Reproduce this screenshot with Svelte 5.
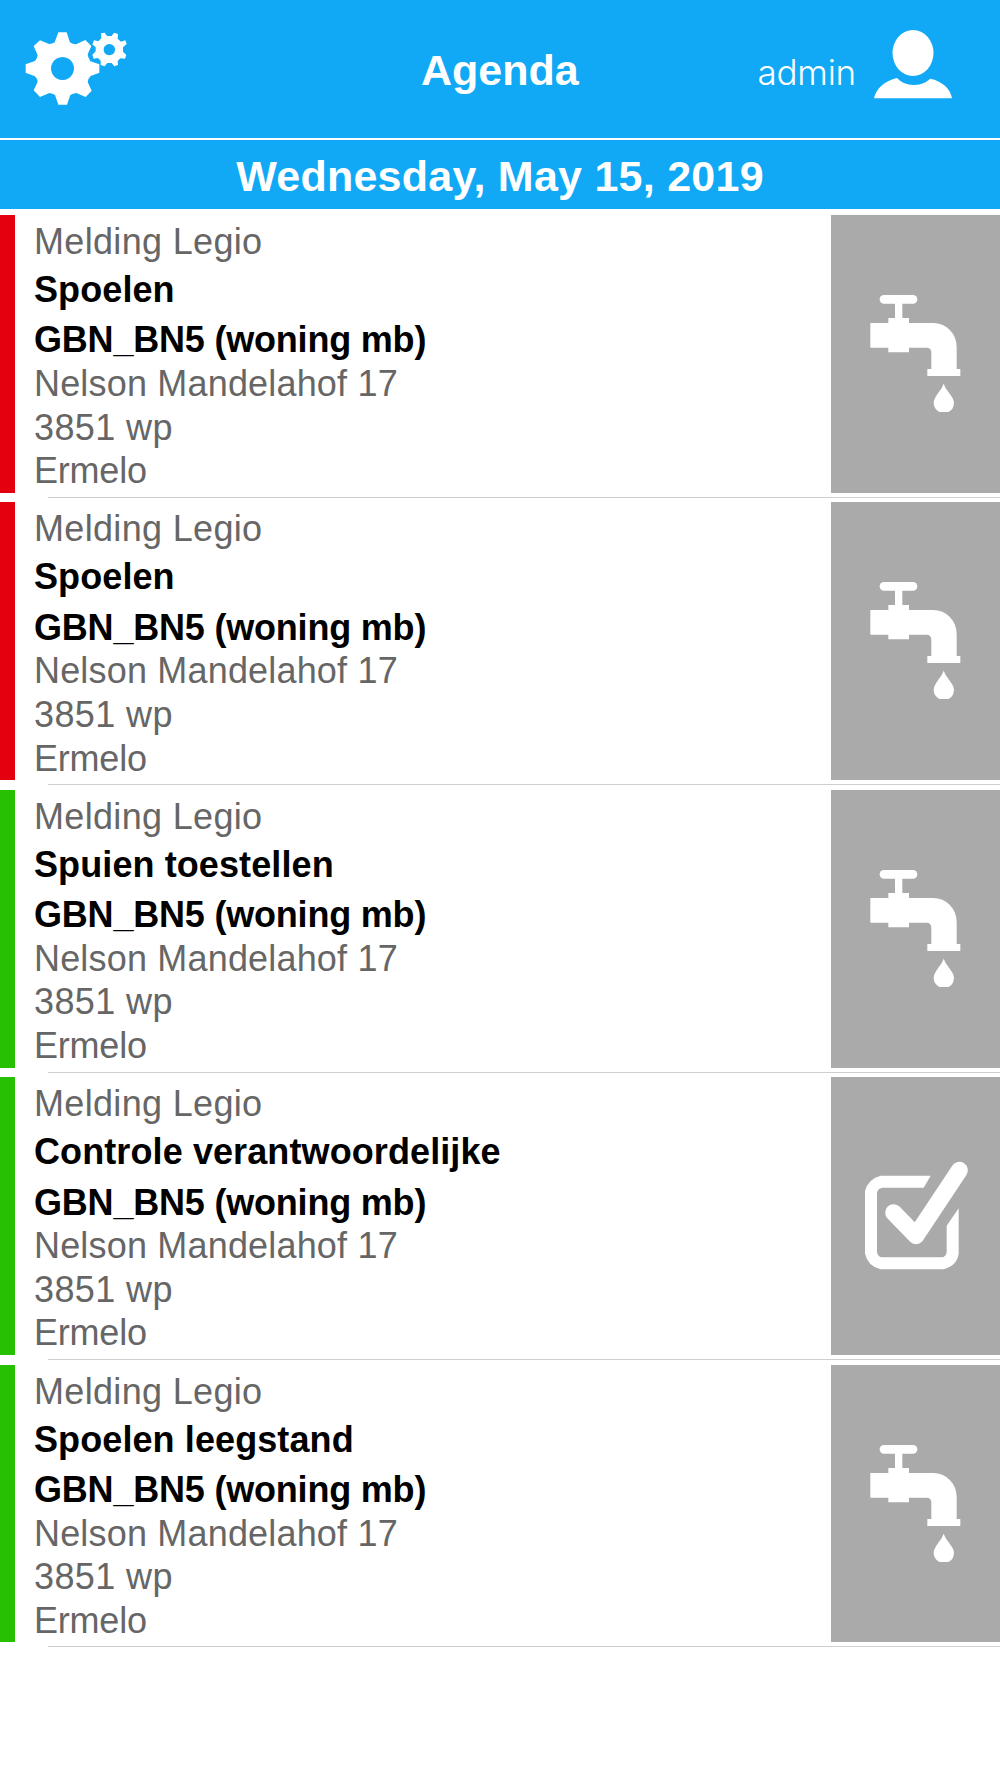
<script>
  const address = [
    { text: 'Nelson Mandelahof 17', kind: 'street' },
    { text: '3851 wp', kind: 'postcode' },
    { text: 'Ermelo', kind: 'city' }
  ];
  const building = 'GBN_BN5 (woning mb)';

  const items = [
    { task: 'Spoelen', status: 'late', icon: 'tap' },
    { task: 'Spoelen', status: 'late', icon: 'tap' },
    { task: 'Spuien toestellen', status: 'open', icon: 'tap' },
    { task: 'Controle verantwoordelijke', status: 'open', icon: 'check' },
    { task: 'Spoelen leegstand', status: 'open', icon: 'tap' }
  ];
</script>

<div class="screen">
  <header class="bar">
    <svg class="gears" viewBox="72 90 312 231" aria-label="Settings">
      <path fill-rule="evenodd" d="M175 97H200L209 125Q211 130 228 133L256 120L274 138L263 163Q263 171 271 184L298 193V218L272 228Q264 236 263 246L275 272L257 291L229 279Q218 280 211 285L201 314H175L165 285Q158 280 148 279L120 291L101 271L113 245Q112 236 105 229L77 218V193L105 183Q112 176 113 166L101 138L120 121L147 132Q158 132 164 127ZM187.500 171a34.500 34.500 0 1 0 .01 0Z" />
      <path fill-rule="evenodd" d="M303 100L314 98L321 108H335L342 98L354 102L353 116L363 125L376 121L380 132L369 142V155L379 165L375 176L361 175L353 183L354 195L343 199L335 189H322L314 199L302 195V182L294 174L281 176L277 164L287 154V142L277 133L282 121L295 124L304 115ZM328 132a17 17 0 1 0 .01 0Z" />
    </svg>
    <h1>Agenda</h1>
    <div class="account">
      <span class="name">admin</span>
      <svg class="avatar" viewBox="396 54 246 216" aria-hidden="true">
        <ellipse cx="519" cy="129" rx="61.500" ry="69" />
        <path d="M402 265C408 236 435 212 471 204Q490 225 520 225Q550 225 571 206C605 213 632 236 636 265Z" />
      </svg>
    </div>
  </header>

  <h2>Wednesday, May 15, 2019</h2>

  <ul>
    {#each items as item}
      <li>
        <div class="status {item.status}"></div>
        <div class="details">
          <p class="kind">Melding Legio</p>
          <p class="strong task">{item.task}</p>
          <p class="strong building">{building}</p>
          {#each address as line}
            <p class={line.kind}>{line.text}</p>
          {/each}
        </div>
        <div class="tile">
          {#if item.icon === 'tap'}
            <svg viewBox="33 45 507 834" aria-hidden="true">
              <rect x="179" y="285" width="113" height="26" rx="13" />
              <path d="M225 309H247V354H267V369H340A70 72 0 0 1 410 441V507H421V528H322V507H334V458Q334 443 319 443H267V457H205V443H151V369H205V354H225Z" />
              <path d="M371 551Q375 564 388 580Q402 598 402 609Q401 629 385 636H358Q342 628 341 609Q341 598 354 580Q367 564 371 551Z" />
            </svg>
          {:else}
            <svg viewBox="33 52 507 834" aria-hidden="true">
              <path d="M332 348L311 384H188Q171 386 171 402V576Q172 592 188 593H364Q379 592 380 576V498L416 446V582Q411 618 370 629H182Q144 620 135 582V394Q144 358 182 348Z" />
              <path class="tick" d="M221 459L288 528L418 332" />
            </svg>
          {/if}
        </div>
      </li>
    {/each}
  </ul>
</div>

<style>
  :global(body) {
    background: #fff;
  }

  .screen {
    width: 1000px;
    height: 1778px;
    overflow: hidden;
    background: #fff;
    font-family: 'Liberation Sans', Arial, sans-serif;
  }

  h1,
  h2,
  p,
  ul {
    margin: 0;
    padding: 0;
  }

  svg {
    display: block;
    fill: #fff;
  }

  .bar {
    box-sizing: border-box;
    height: 140px;
    padding: 0 46px 0 24px;
    display: grid;
    grid-template-columns: 397px 158px 375px;
    background: #11a9f5;
    border-bottom: 2px solid #fff;
    color: #fff;
  }

  .gears {
    width: 104px;
    height: 77px;
    margin-top: 30px;
  }

  h1 {
    font-size: 43px;
    line-height: 141px;
    letter-spacing: 0;
    white-space: nowrap;
  }

  .account {
    display: flex;
    justify-content: flex-end;
    gap: 16px;
  }

  .name {
    font-family: Inter, sans-serif;
    font-weight: 300;
    font-size: 35px;
    line-height: 145px;
    letter-spacing: -0.2px;
  }

  .avatar {
    width: 82px;
    height: 72px;
    margin-top: 28px;
  }

  h2 {
    height: 69.4px;
    background: #11a9f5;
    color: #fff;
    text-align: center;
    font-size: 43px;
    line-height: 73px;
    letter-spacing: 0.25px;
  }

  ul {
    list-style: none;
    padding-top: 1px;
  }

  li {
    position: relative;
    box-sizing: border-box;
    height: 287.4px;
    padding: 4.7px 0 5px;
    display: flex;
  }

  li::after {
    content: '';
    position: absolute;
    left: 48px;
    right: 0;
    bottom: 0;
    height: 1px;
    background: #cececf;
  }

  .status {
    width: 14.7px;
  }

  .late {
    background: #e3000f;
  }

  .open {
    background: #28c003;
  }

  .details {
    flex: 1;
    padding: 4.9px 0 0 19.3px;
    color: #666;
    font-size: 36px;
    line-height: 43.6px;
    white-space: nowrap;
  }

  .kind {
    letter-spacing: 0.33px;
  }

  .street {
    letter-spacing: 0.18px;
  }

  .postcode {
    letter-spacing: 0.4px;
  }

  .city {
    letter-spacing: -0.2px;
  }

  .strong {
    color: #000;
    font-weight: bold;
  }

  .task {
    margin-top: 4.4px;
    letter-spacing: 0.1px;
  }

  .building {
    margin-top: 6.8px;
    letter-spacing: -0.2px;
  }

  .tile {
    width: 169px;
    background: #aaa;
  }

  .tile svg {
    width: 169px;
    height: 278px;
  }

  .tick {
    fill: none;
    stroke: #fff;
    stroke-width: 51;
    stroke-linecap: round;
    stroke-linejoin: round;
  }
</style>
